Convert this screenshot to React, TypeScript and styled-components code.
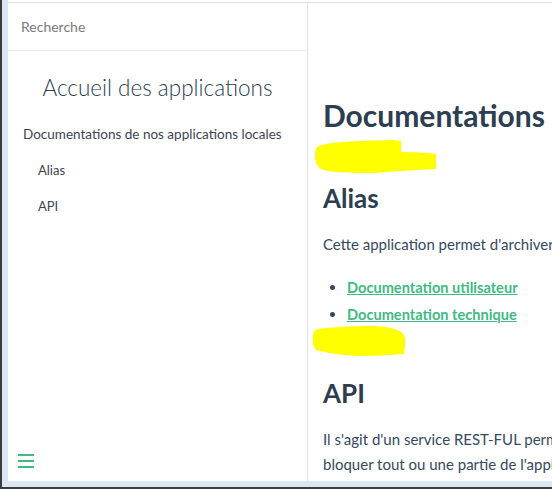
import { createGlobalStyle } from 'styled-components';
import styled from 'styled-components';

const GlobalStyle = createGlobalStyle`
	html, body {
		margin: 0;
		padding: 0;
		background: #3c3c3c;
	}
	* {
		box-sizing: border-box;
	}
`;

const Window = styled.div`
	width: 552px;
	height: 489px;
	padding: 0 0 2px 2px;
	display: flex;
	overflow: hidden;
	font-family: Lato, 'Open Sans', sans-serif;
`;

const Frame = styled.div`
	flex: 1;
	display: flex;
	background: #dae6f2;
	padding: 0 0 6px 6px;
`;

const Page = styled.div`
	flex: 1;
	display: flex;
	background: #fff;
	padding-top: 2px;
	min-width: 0;
`;

const Body = styled.div`
	flex: 1;
	display: flex;
	border-top: 1px solid #dedede;
	min-width: 0;
`;

const Sidebar = styled.aside`
	width: 300px;
	flex-shrink: 0;
	display: flex;
	flex-direction: column;
	border-right: 1px solid #e4e4e4;
`;

const Search = styled.div`
	height: 48px;
	border-bottom: 1px solid #ececec;
	padding-left: 13px;
	display: flex;
	align-items: center;
	font-size: 14px;
	color: #7b7b7b;
`;

const AppName = styled.h1`
	margin: 22px 0 0;
	font-size: 22.5px;
	line-height: 30px;
	font-weight: 300;
	text-align: center;
	color: #2c3e50;
`;

const Nav = styled.ul`
	list-style: none;
	margin: 13px 0 0;
	padding: 0;
`;

const NavItem = styled.li<{ $depth?: number }>`
	height: 36px;
	line-height: 36px;
	padding-left: ${(p) => (p.$depth ? 30 : 15)}px;
	font-size: ${(p) => (p.$depth ? 13 : 13.5)}px;
	color: #3a4550;
	white-space: nowrap;
`;

const Toggle = styled.button`
	margin: auto 0 13px 10px;
	width: 16px;
	padding: 0;
	border: 0;
	background: none;
	display: flex;
	flex-direction: column;
	gap: 4px;

	span {
		display: block;
		height: 2px;
		background: #42b983;
	}
`;

const Main = styled.main`
	position: relative;
	flex: 1;
	min-width: 0;
	overflow: hidden;
	padding: 94px 0 0 15px;
	color: #34495e;
	white-space: nowrap;
`;

const H1 = styled.h1`
	margin: 0;
	font-size: 30px;
	line-height: 36px;
	font-weight: 700;
	color: #2c3e50;
`;

const H2 = styled.h2<{ $top: number }>`
	margin: ${(p) => p.$top}px 0 0;
	font-size: 26px;
	line-height: 32px;
	font-weight: 700;
	color: #2c3e50;
`;

const Para = styled.p<{ $top: number }>`
	margin: ${(p) => p.$top}px 0 0;
	font-size: 15px;
	line-height: 25px;
`;

const List = styled.ul`
	margin: 17px 0 0;
	padding-left: 24px;
	font-size: 15px;
	line-height: 26px;
`;

const Link = styled.a`
	color: #42b983;
	font-size: 14.6px;
	font-weight: 700;
	text-decoration: underline;
`;

const Marker = styled.svg`
	position: absolute;
	pointer-events: none;
`;

export default function App() {
	return (
		<>
			<GlobalStyle />
			<Window>
				<Frame>
					<Page>
						<Body>
							<Sidebar>
								<Search>Recherche</Search>
								<AppName>Accueil des applications</AppName>
								<Nav>
									<NavItem>Documentations de nos applications locales</NavItem>
									<NavItem $depth={1}>Alias</NavItem>
									<NavItem $depth={1}>API</NavItem>
								</Nav>
								<Toggle aria-label="menu">
									<span />
									<span />
									<span />
								</Toggle>
							</Sidebar>
							<Main>
								<H1>Documentations</H1>
								<H2 $top={49}>Alias</H2>
								<Para $top={18}>Cette application permet d'archiver</Para>
								<List>
									<li>
										<Link href="#">Documentation utilisateur</Link>
									</li>
									<li>
										<Link href="#">Documentation technique</Link>
									</li>
								</List>
								<H2 $top={49}>API</H2>
								<Para $top={18}>
									Il s'agit d'un service REST-FUL perm
									<br />
									bloquer tout ou une partie de l'appl
								</Para>
								<Marker
									style={{ left: 7, top: 137 }}
									width="122"
									height="34"
									viewBox="0 0 122 34"
								>
									<path
										d="M4 6 C14 2 40 1 78 0 L86 1 L86 12 C100 12 116 13 121 14 L121 29 C100 30 80 31 60 33 C40 33 20 33 8 30 C2 27 0 22 0 16 C0 10 1 7 4 6 Z"
										fill="#ffff00"
									/>
								</Marker>
								<Marker
									style={{ left: 4, top: 323 }}
									width="94"
									height="32"
									viewBox="0 0 94 32"
								>
									<path
										d="M6 3 C20 1 40 0 62 0 C78 1 88 3 92 9 C94 14 93 20 92 28 C80 29 60 30 45 30 C30 29 15 27 4 24 C1 20 0 14 1 9 C2 5 3 4 6 3 Z"
										fill="#ffff00"
									/>
								</Marker>
							</Main>
						</Body>
					</Page>
				</Frame>
			</Window>
		</>
	);
}
